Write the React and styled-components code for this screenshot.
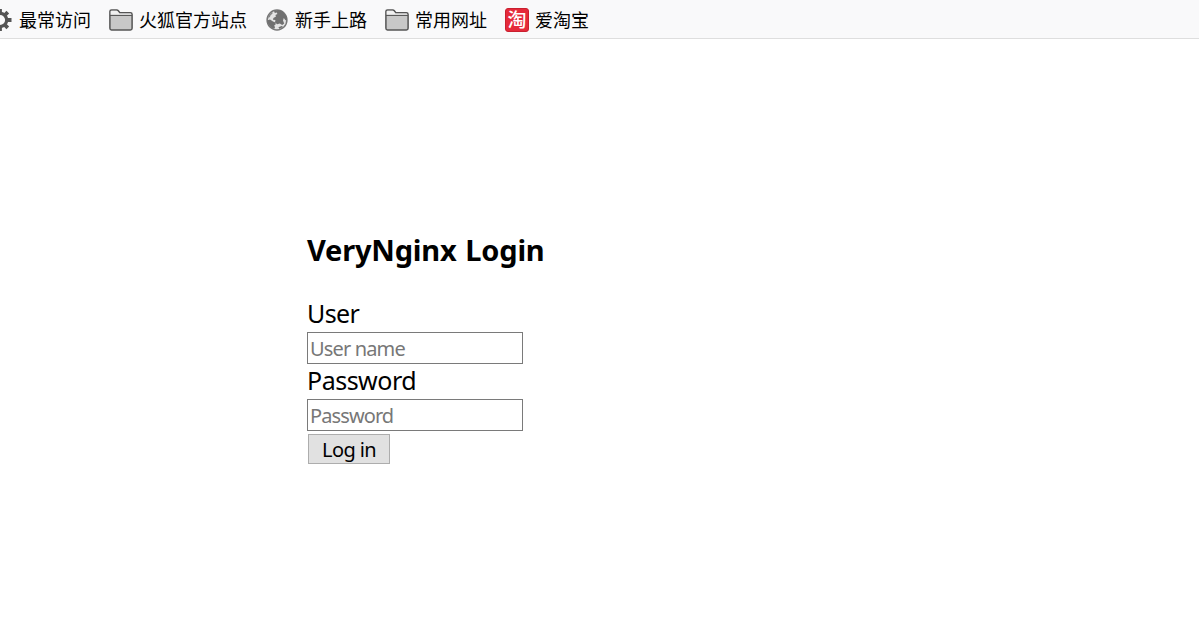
import React from 'react';
import styled, { createGlobalStyle } from 'styled-components';

const GlobalStyle = createGlobalStyle`
  * { box-sizing: border-box; }
  body {
    margin: 0;
    background: #fff;
    color: #000;
    font-family: "Noto Sans", "Noto Sans CJK SC", sans-serif;
  }
`;

const Page = styled.div`
  height: 640px;
  overflow: hidden;
`;

const BookmarkBar = styled.nav`
  display: flex;
  height: 39px;
  background: #f9f9fa;
  border-bottom: 1px solid #dedede;
  overflow: hidden;
`;

const Bookmark = styled.div`
  display: flex;
  flex: none;
  align-items: center;
  width: ${(p) => p.$width}px;
  height: 40px;
  white-space: nowrap;
`;

const BookmarkName = styled.span`
  padding-bottom: 2px;
  font: 18px/24px "Noto Sans CJK SC", sans-serif;
`;

const IconSlot = styled.span`
  display: flex;
  flex: none;
  width: ${(p) => p.$width}px;
`;

const Icon = styled.svg`
  display: block;
  flex: none;
  margin-left: ${(p) => p.$shift || 0}px;
`;

const ShopBadge = styled.span`
  width: 24px;
  height: 24px;
  border-radius: 3px;
  border: 1px solid #c9202f;
  background: #e52a3a;
  color: #fff;
  font: 500 19px/20px "Noto Sans CJK SC", sans-serif;
  text-align: center;
`;

const LoginForm = styled.form`
  display: flex;
  flex-direction: column;
  align-items: flex-start;
  padding: 191px 0 0 307px;
`;

const Title = styled.h1`
  margin: 0 0 30px;
  font-size: 29px;
  line-height: 40px;
  font-weight: 700;
  letter-spacing: -0.2px;
  word-spacing: 1.5px;
`;

const Label = styled.label`
  height: ${(p) => p.$height}px;
  font-size: 25px;
  line-height: 26px;
  letter-spacing: ${(p) => p.$tracking}px;
`;

const Field = styled.input`
  width: 216px;
  height: 32px;
  margin: 0 0 3px;
  padding: 0 2px;
  border: 1px solid #7a7a7a;
  border-radius: 0;
  background: #fff;
  font: 20px "Noto Sans", sans-serif;
  letter-spacing: ${(p) => p.$tracking}px;
  outline: none;
  &::placeholder { color: #777; opacity: 1; }
`;

const SubmitButton = styled.button`
  width: 82px;
  height: 30px;
  margin: 0 0 0 1px;
  padding: 1px 0 0;
  border: 1px solid #adadad;
  border-radius: 0;
  background: #e1e1e1;
  color: #000;
  font: 20px/26px "Noto Sans", sans-serif;
  letter-spacing: -0.6px;
`;

const GearIcon = () => (
  <Icon $shift={-12} width="24" height="24" viewBox="0 0 24 24" fill="none" stroke="#555">
    <circle cx="12" cy="12" r="6.7" strokeWidth="3.2" />
    <path d="M12 1v4M12 19v4M1 12h4M19 12h4.5M4.2 4.2l3 3M16.8 16.8l3 3M4.2 19.8l3-3M16.8 7.2l3-3" strokeWidth="3.8" />
  </Icon>
);

const FolderIcon = () => (
  <Icon width="24" height="22" viewBox="0 0 24 22" stroke="#555" strokeWidth="1.5" strokeLinejoin="round">
    <path d="M.9 19.3V2.6Q.9 1 2.5 1h5.2q1 0 1.6.8l1.5 2h10.6q1.7 0 1.7 1.7v13.8q0 1.7-1.7 1.7H2.5Q.9 21 .9 19.3z" fill="#c8c8c8" />
    <path d="M1.7 6V2.6q0-.8.8-.8h5.2q.6 0 1 .6l1.7 2.2h11q.9 0 .9.9V6z" fill="#f1f1f1" stroke="none" />
    <path d="M1 6.4h22" fill="none" strokeWidth="1.1" />
  </Icon>
);

const GlobeIcon = () => (
  <Icon width="22" height="22" viewBox="0 0 22 22">
    <circle cx="11" cy="11" r="9.9" fill="#e3e3e3" stroke="#777" strokeWidth="1.5" />
    <path
      d="M8 2.2L12 1l4.8 1.8 3.4 4.2.8 4-1.6.2-1.6-2.2-.8 2.4 1.2 3-2 1.6-2.4-1.4-2.6.6-2.2-1.6.4-2.6-2.4-.2.4-1.8 2.6-1.6-.6-1.4 2-1-.6-1.4-2 .4z"
      fill="#707070"
    />
    <path d="M1.4 11.2l2.6-.6 3 1.8 2.4 1 .4 1.8-1.6 1.4.8 1.6-.8 1.8-3.4-1.8-2.6-3.2z" fill="#707070" />
    <path d="M1.8 8.4l1.6-3.2L6.2 3l.4 1.6-2 1.6-.8 2z" fill="#858585" />
    <path d="M12.4 18.2l3.2-1.2 1.4.8-3.4 2.2z" fill="#707070" />
  </Icon>
);

export default function App() {
  return (
    <Page>
      <GlobalStyle />
      <BookmarkBar>
        <Bookmark $width={109}>
          <IconSlot $width={19}><GearIcon /></IconSlot>
          <BookmarkName>最常访问</BookmarkName>
        </Bookmark>
        <Bookmark $width={157}>
          <IconSlot $width={30}><FolderIcon /></IconSlot>
          <BookmarkName>火狐官方站点</BookmarkName>
        </Bookmark>
        <Bookmark $width={119}>
          <IconSlot $width={29}><GlobeIcon /></IconSlot>
          <BookmarkName>新手上路</BookmarkName>
        </Bookmark>
        <Bookmark $width={120}>
          <IconSlot $width={30}><FolderIcon /></IconSlot>
          <BookmarkName>常用网址</BookmarkName>
        </Bookmark>
        <Bookmark $width={100}>
          <IconSlot $width={30}><ShopBadge>淘</ShopBadge></IconSlot>
          <BookmarkName>爱淘宝</BookmarkName>
        </Bookmark>
      </BookmarkBar>
      <LoginForm onSubmit={(e) => e.preventDefault()}>
        <Title>VeryNginx Login</Title>
        <Label htmlFor="user" $height={32} $tracking={-0.6}>User</Label>
        <Field id="user" placeholder="User name" $tracking={-0.85} />
        <Label htmlFor="password" $height={32} $tracking={-0.5}>Password</Label>
        <Field id="password" type="password" placeholder="Password" $tracking={-0.9} />
        <SubmitButton>Log in</SubmitButton>
      </LoginForm>
    </Page>
  );
}
